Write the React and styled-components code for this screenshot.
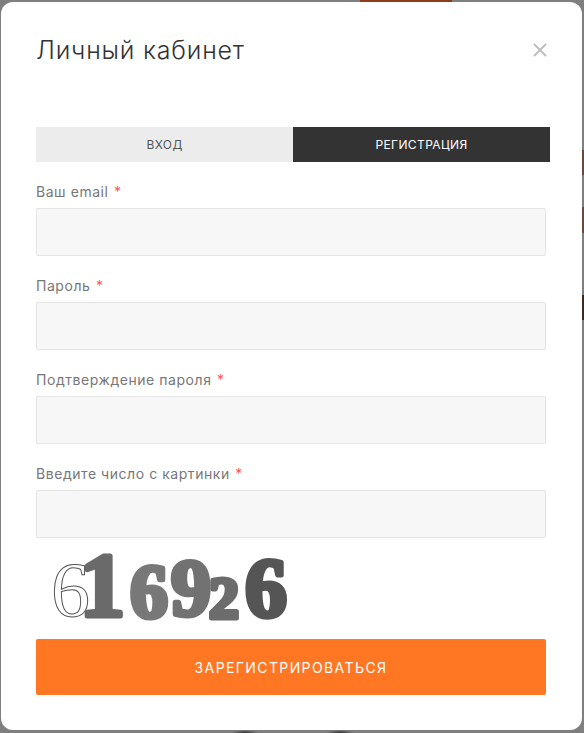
import React from 'react'
import styled, { createGlobalStyle } from 'styled-components'

const fields = [
  { label: 'Ваш email', type: 'email' },
  { label: 'Пароль', type: 'password' },
  { label: 'Подтверждение пароля', type: 'password' },
  { label: 'Введите число с картинки', type: 'text' },
]

const GlobalStyle = createGlobalStyle`
  * { box-sizing: border-box; }
  html, body { margin: 0; height: 100%; overflow: hidden; }
  body { font-family: Inter, "Open Sans", "Liberation Sans", sans-serif; background: #7f7f7f; }
`

const Backdrop = styled.div`
  position: relative;
  width: 584px;
  height: 733px;
  padding: 2px 2px 3px 1px;
  background:
    linear-gradient(#6a4a3a, #6a4a3a) right 150px / 2px 25px no-repeat,
    linear-gradient(#6a4a3a, #6a4a3a) right 207px / 2px 26px no-repeat,
    linear-gradient(#3a2a20, #3a2a20) right 295px / 2px 25px no-repeat,
    radial-gradient(ellipse 14px 3px at 245px 733px, #333, transparent),
    radial-gradient(ellipse 14px 3px at 340px 733px, #333, transparent),
    #7f7f7f;
`

const TopStrip = styled.div`
  position: absolute;
  top: 0;
  left: 360px;
  width: 92px;
  height: 2px;
  background: #8a3f1a;
`

const Modal = styled.div`
  position: relative;
  height: 728px;
  padding: 34px 35px 0;
  background: #fff;
  border-radius: 12px;
`

const Header = styled.div`
  display: flex;
  justify-content: space-between;
  align-items: center;
  height: 28px;
  margin-bottom: 63px;
`

const Title = styled.h2`
  margin: 0;
  font-size: 25px;
  font-weight: 300;
  line-height: 28px;
  letter-spacing: 0.8px;
  color: #333;
`

const Close = styled.button`
  display: flex;
  padding: 0;
  margin-right: -1px;
  border: 0;
  background: none;
  color: #bdbdbd;
`

const Tabs = styled.div`
  display: grid;
  grid-template-columns: 257px 257px;
  height: 35px;
  margin-bottom: 20px;
`

const Tab = styled.div`
  display: flex;
  align-items: center;
  justify-content: center;
  font-size: 12px;
  letter-spacing: 0.4px;
  background: ${p => (p.$active ? '#333' : '#ececec')};
  color: ${p => (p.$active ? '#fff' : '#555')};
`

const Field = styled.div`
  width: 510px;
  margin-bottom: 20px;
`

const Label = styled.label`
  display: block;
  height: 26px;
  font-size: 14px;
  line-height: 20px;
  letter-spacing: 0.55px;
  color: #777;
  span { color: #f55; margin-left: 1px; }
`

const Input = styled.input`
  display: block;
  width: 100%;
  height: 48px;
  border: 1px solid #e5e5e5;
  border-radius: 2px;
  background: #f7f7f7;
`

const Captcha = styled.svg`
  display: block;
  margin: -18px 0 9px;
`

const Digit = styled.text`
  font-family: "Liberation Serif", serif;
  font-weight: 700;
  stroke-width: 5px;
  stroke-linejoin: round;
  stroke: ${p => p.fill};
`

const OutlineDigit = styled.text`
  font-family: "Liberation Serif", serif;
  font-size: 78px;
  fill: none;
  stroke: #555;
  stroke-width: 1px;
`

const Submit = styled.button`
  display: block;
  width: 510px;
  height: 56px;
  border: 0;
  border-radius: 2px;
  background: #ff7722;
  color: #fff;
  font-family: inherit;
  font-size: 14px;
  letter-spacing: 1.4px;
`

const App = () => {
  return (
    <Backdrop>
      <GlobalStyle />
      <TopStrip />
      <Modal>
        <Header>
          <Title>Личный кабинет</Title>
          <Close aria-label="Закрыть">
            <svg width="16" height="16" viewBox="0 0 16 16" fill="none" stroke="currentColor" strokeWidth="1.8">
              <path d="M2 2l12 12M14 2L2 14" />
            </svg>
          </Close>
        </Header>
        <Tabs>
          <Tab>ВХОД</Tab>
          <Tab $active>РЕГИСТРАЦИЯ</Tab>
        </Tabs>
        {fields.map(f => (
          <Field key={f.label}>
            <Label>{f.label} <span>*</span></Label>
            <Input type={f.type} />
          </Field>
        ))}
        <Captcha width="260" height="90" viewBox="0 0 260 90">
          <OutlineDigit x="15" y="76">6</OutlineDigit>
          <Digit x="44" y="76" fontSize="90" fill="#6a6a6a">1</Digit>
          <Digit x="94" y="77" fontSize="76" fill="#787878">6</Digit>
          <Digit x="135" y="75" fontSize="80" fill="#727272">9</Digit>
          <Digit x="173" y="78" fontSize="60" fill="#6c6c6c">2</Digit>
          <Digit x="209" y="77" fontSize="84" fill="#555">6</Digit>
        </Captcha>
        <Submit>ЗАРЕГИСТРИРОВАТЬСЯ</Submit>
      </Modal>
    </Backdrop>
  )
}

export default App
